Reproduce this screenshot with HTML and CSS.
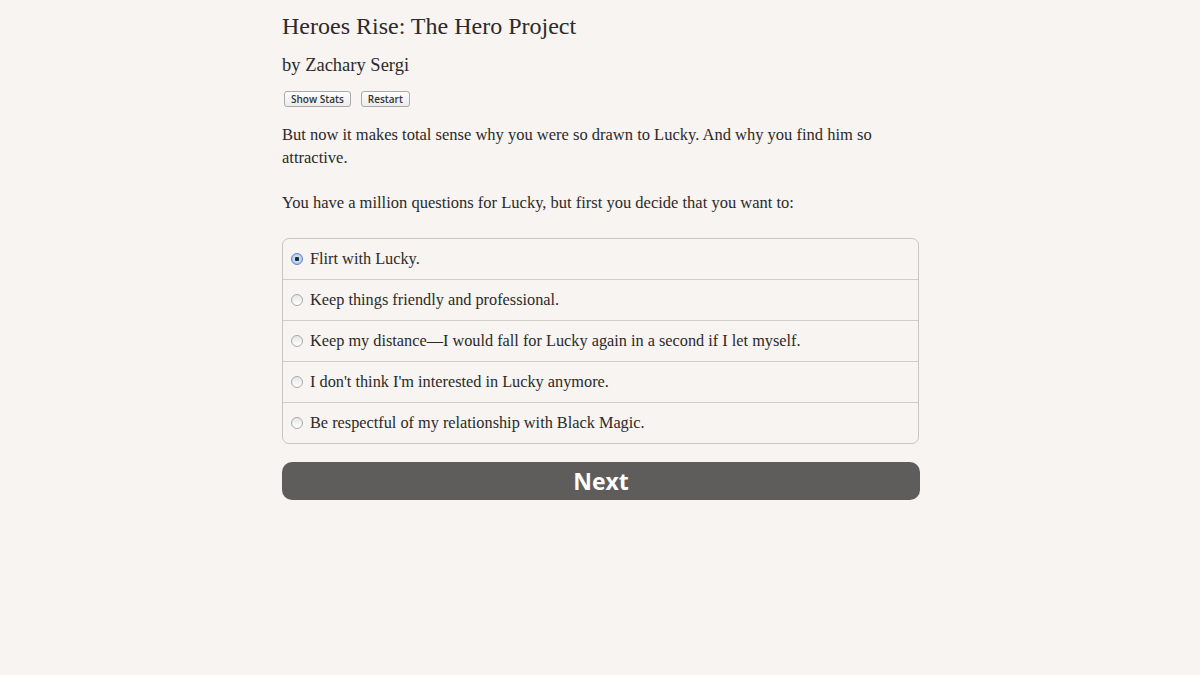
FILE: index.html
```html
<!DOCTYPE html>
<html>
<head>
<meta charset="utf-8">
<link rel="stylesheet" href="styles.css">
</head>
<body>
<main class="page">
  <h1 class="title">Heroes Rise: The Hero Project</h1>
  <h2 class="author">by Zachary Sergi</h2>
  <div class="buttons">
    <button class="small-btn">Show Stats</button>
    <button class="small-btn">Restart</button>
  </div>
  <p class="text">But now it makes total sense why you were so drawn to Lucky. And why you find him so attractive.</p>
  <p class="text">You have a million questions for Lucky, but first you decide that you want to:</p>
  <div class="choices">
    <label class="choice"><span class="radio checked"></span>Flirt with Lucky.</label>
    <label class="choice"><span class="radio"></span>Keep things friendly and professional.</label>
    <label class="choice"><span class="radio"></span>Keep my distance—I would fall for Lucky again in a second if I let myself.</label>
    <label class="choice"><span class="radio"></span>I don't think I'm interested in Lucky anymore.</label>
    <label class="choice"><span class="radio"></span>Be respectful of my relationship with Black Magic.</label>
  </div>
  <button class="next">Next</button>
</main>
</body>
</html>
```
FILE: styles.css
```css
html, body {
  margin: 0;
  padding: 0;
  background: #f7f4f1;
}
body {
  font-family: "Liberation Serif", "Times New Roman", serif;
  color: #2a2a2a;
}
.page {
  width: 637px;
  margin: 0 auto;
  padding-top: 10px;
  padding-left: 1px;
  box-sizing: content-box;
}
.title {
  font-size: 24px;
  font-weight: normal;
  margin: 0;
  line-height: 32px;
  color: #2b2b2b;
}
.author {
  font-size: 18.5px;
  font-weight: normal;
  margin: 11px 0 0 0;
  line-height: 24px;
}
.buttons {
  display: flex;
  gap: 10px;
  margin-top: 14px;
  padding-left: 2px;
}
.small-btn {
  font-family: "Open Sans", "Liberation Sans", sans-serif;
  font-size: 10px;
  font-weight: 600;
  color: #333;
  background: linear-gradient(#fdfdfd, #ececec);
  border: 1px solid #aaa;
  border-radius: 3px;
  padding: 0 6px;
  height: 16px;
  line-height: 14px;
}
.text {
  font-size: 16.5px;
  line-height: 23px;
  margin: 16px 0 0 0;
}
.text + .text {
  margin-top: 22px;
}
.choices {
  margin-top: 24px;
  border: 1px solid #c8c5c2;
  border-radius: 7px;
  display: flex;
  flex-direction: column;
}
.choice {
  display: flex;
  align-items: center;
  height: 40px;
  padding-left: 8px;
  font-size: 16.3px;
  border-top: 1px solid #d0cdca;
}
.choice:first-child {
  border-top: none;
}
.radio {
  width: 12px;
  height: 12px;
  border-radius: 50%;
  border: 1px solid #a9a9a9;
  background: linear-gradient(#e6e6e6, #fff);
  margin-right: 7px;
  box-sizing: border-box;
  flex: none;
}
.radio.checked {
  border-color: #5b86c4;
  background: radial-gradient(circle, #1c2a40 0 2px, #cfe0f5 2.5px, #8fb3e2 100%);
}
.next {
  display: block;
  width: 638px;
  margin-top: 18px;
  height: 38px;
  border: none;
  border-radius: 10px;
  background: #5f5d5b;
  color: #fff;
  font-family: "Open Sans", "Liberation Sans", sans-serif;
  font-weight: 700;
  font-size: 23px;
  padding: 0;
}
```
